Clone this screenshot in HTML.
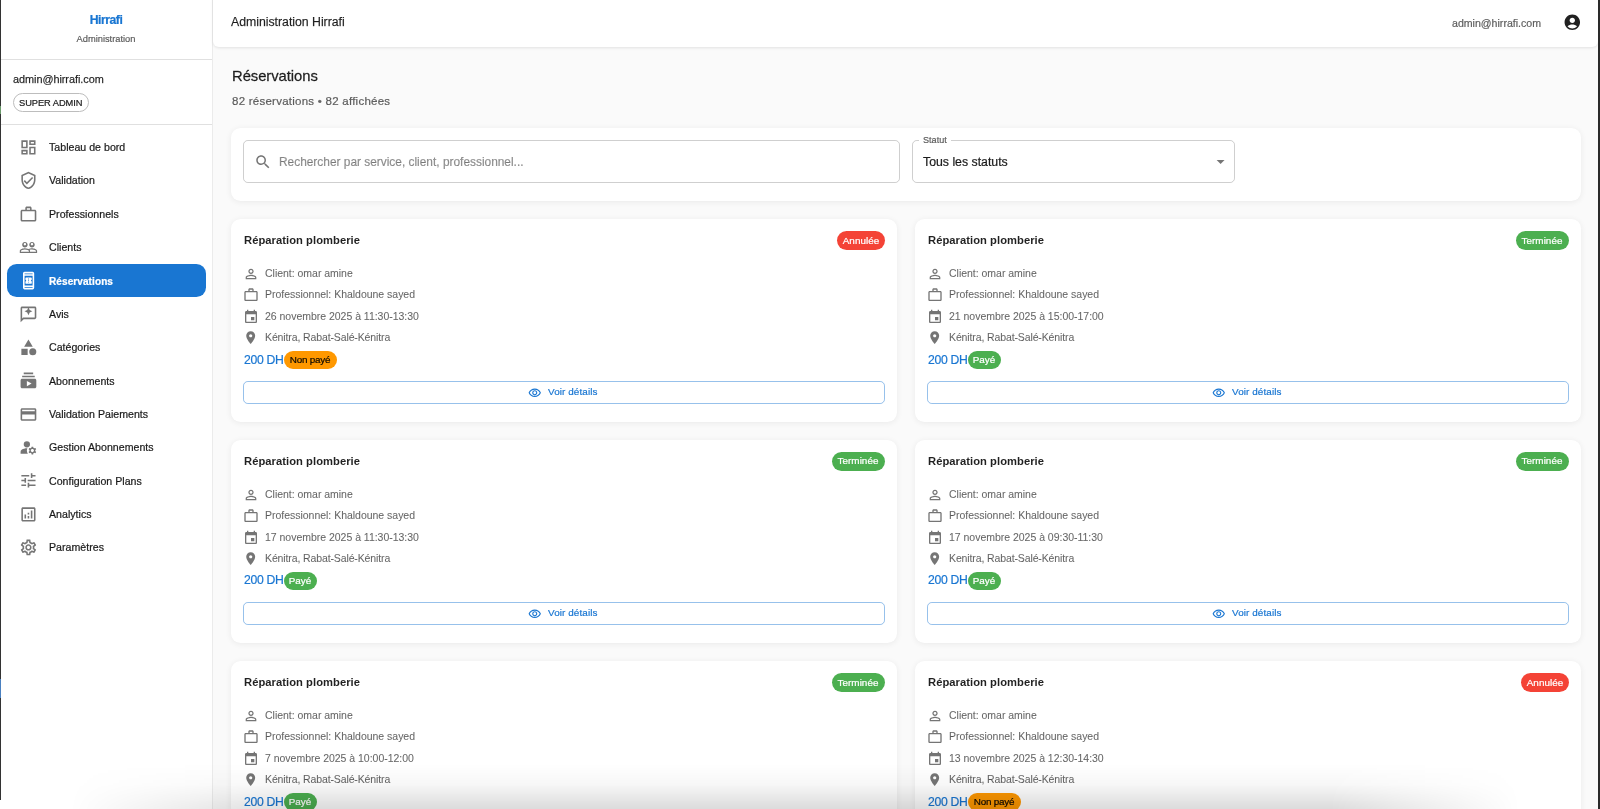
<!DOCTYPE html>
<html lang="fr"><head><meta charset="utf-8"><title>Administration Hirrafi</title>
<style>
*{box-sizing:border-box;margin:0;padding:0}
html,body{width:1600px;height:809px;overflow:hidden;background:#fafafa;font-family:"Liberation Sans",sans-serif}
#root{position:relative;width:1600px;height:809px;overflow:hidden;background:#fafafa}
.t{position:absolute;white-space:nowrap;line-height:1.117;will-change:transform;-webkit-text-stroke:0.22px currentColor}
.ic{position:absolute;display:block}
#sidebar{position:absolute;left:0;top:0;width:213px;height:809px;background:#fff;border-right:1px solid rgba(0,0,0,0.08)}
.hr{position:absolute;height:1px;background:rgba(0,0,0,0.12)}
.chip-o{position:absolute;border:1px solid #bdbdbd;border-radius:10px}
.chip{position:absolute;border-radius:10px}
.sel{position:absolute;background:#1976d2;border-radius:9.6px}
#topbar{position:absolute;left:213px;top:-6px;width:1385px;height:53px;background:#fff;border-radius:6px;box-shadow:0 1px 3px rgba(0,0,0,0.10)}
.card{position:absolute;background:#fff;border-radius:9.6px;box-shadow:0 1px 6px rgba(0,0,0,0.07)}
.input{position:absolute;border:1px solid rgba(0,0,0,0.19);border-radius:4.8px}
.btn{position:absolute;border:1px solid rgba(25,118,210,0.45);border-radius:4.8px}
#bs{position:absolute;left:0;top:764px;width:1600px;height:45px;background:linear-gradient(to bottom,rgba(0,0,0,0),rgba(0,0,0,0.03) 45%,rgba(0,0,0,0.14));-webkit-mask-image:linear-gradient(to right,transparent 70px,#000 300px,#000 1330px,transparent 1520px);pointer-events:none}
#lb{position:absolute;left:0;top:0;width:1.2px;height:800px;background:#333}
.mk{position:absolute;left:0;width:1.2px}
#rb{position:absolute;left:1598px;top:0;width:2px;height:809px;background:#2a2a2a}
</style></head>
<body><div id="root">
<div id="sidebar"></div>
<div class="t" style="top:14.00px;font-size:12.2px;color:#1976d2;font-weight:700;letter-spacing:-0.45px;left:-193.60px;width:600px;text-align:center;">Hirrafi</div>
<div class="t" style="top:34.00px;font-size:9.3px;color:rgba(0,0,0,0.6);left:-193.60px;width:600px;text-align:center;">Administration</div>
<div class="hr" style="left:1px;top:59px;width:211px"></div>
<div class="t" style="top:73.00px;font-size:10.9px;color:rgba(0,0,0,0.87);letter-spacing:-0.05px;left:12.90px;-webkit-text-stroke:0.25px rgba(0,0,0,0.6);">admin@hirrafi.com</div>
<div class="chip-o" style="left:12.9px;top:93.1px;width:75.7px;height:19px"></div>
<div class="t" style="top:98.00px;font-size:9.3px;color:rgba(0,0,0,0.87);letter-spacing:-0.05px;left:18.90px;">SUPER ADMIN</div>
<div class="hr" style="left:1px;top:124px;width:211px"></div>
<svg class="ic" style="left:19.00px;top:138.05px;width:18.9px;height:18.9px" viewBox="0 0 24 24"><path fill="rgba(0,0,0,0.54)" fill-rule="nonzero" d="M19 5v2h-4V5zM9 5v6H5V5zm10 8v6h-4v-6zM9 17v2H5v-2zM21 3h-8v6h8zM11 3H3v10h8zm10 8h-8v10h8zm-10 4H3v6h8z"/></svg>
<div class="t" style="top:142.00px;font-size:10.6px;color:rgba(0,0,0,0.87);letter-spacing:0.02px;left:49.40px;">Tableau de bord</div>
<svg class="ic" style="left:19.00px;top:171.38px;width:18.9px;height:18.9px" viewBox="0 0 24 24"><path fill="rgba(0,0,0,0.54)" fill-rule="nonzero" d="M12 1 3 5v6c0 5.55 3.84 10.74 9 12 5.16-1.26 9-6.45 9-12V5zm7 10c0 4.52-2.98 8.69-7 9.93-4.02-1.24-7-5.41-7-9.93V6.3l7-3.11 7 3.11zm-11.59.59L6 13l4 4 8-8-1.41-1.42L10 14.17z"/></svg>
<div class="t" style="top:175.00px;font-size:10.6px;color:rgba(0,0,0,0.87);letter-spacing:0.02px;left:49.40px;">Validation</div>
<svg class="ic" style="left:19.00px;top:204.71px;width:18.9px;height:18.9px" viewBox="0 0 24 24"><path fill="rgba(0,0,0,0.54)" fill-rule="nonzero" d="M14 6V4h-4v2zM4 8v11h16V8zm16-2c1.11 0 2 .89 2 2v11c0 1.11-.89 2-2 2H4c-1.11 0-2-.89-2-2l.01-11c0-1.11.88-2 1.99-2h4V4c0-1.11.89-2 2-2h4c1.11 0 2 .89 2 2v2z"/></svg>
<div class="t" style="top:209.00px;font-size:10.6px;color:rgba(0,0,0,0.87);letter-spacing:0.02px;left:49.40px;">Professionnels</div>
<svg class="ic" style="left:19.00px;top:238.04px;width:18.9px;height:18.9px" viewBox="0 0 24 24"><path fill="rgba(0,0,0,0.54)" fill-rule="nonzero" d="M16.5 13c-1.2 0-3.07.34-4.5 1-1.43-.67-3.3-1-4.5-1C5.33 13 1 14.08 1 16.25V19h22v-2.75c0-2.17-4.33-3.25-6.5-3.25m-4 4.5h-10v-1.25c0-.54 2.56-1.75 5-1.75s5 1.21 5 1.75zm9 0H14v-1.25c0-.46-.2-.86-.52-1.22.88-.3 1.96-.53 3.02-.53 2.44 0 5 1.21 5 1.75zM7.5 12c1.93 0 3.5-1.57 3.5-3.5S9.43 5 7.5 5 4 6.57 4 8.5 5.570 12 7.5 12m0-5.5c.83 0 1.5.67 1.5 1.5s-.67 1.5-1.5 1.5S6 8.83 6 8s.67-1.5 1.5-1.5m9 5.5c1.93 0 3.5-1.57 3.5-3.5S18.43 5 16.5 5 13 6.57 13 8.5s1.57 3.5 3.5 3.5m0-5.5c.83 0 1.5.67 1.5 1.5s-.67 1.5-1.5 1.5-1.5-.67-1.5-1.5.67-1.5 1.5-1.5"/></svg>
<div class="t" style="top:242.00px;font-size:10.6px;color:rgba(0,0,0,0.87);letter-spacing:0.02px;left:49.40px;">Clients</div>
<div class="sel" style="left:6.9px;top:264.22px;width:199.4px;height:33px"></div>
<svg class="ic" style="left:18.60px;top:271.22px;width:19.2px;height:19.2px" viewBox="0 0 24 24"><path fill="#fff" fill-rule="evenodd" d="M17 1H7c-1.1 0-2 .9-2 2v18c0 1.1.9 2 2 2h10c1.1 0 2-.9 2-2V3c0-1.1-.9-2-2-2zM7 3h10v1H7zM7 6h10v12H7zM7 20h10v1H7zM16 11V9.14C16 8.51 15.55 8 15 8H9c-.55 0-1 .51-1 1.14v1.96c.55 0 1 .45 1 1s-.45 1-1 1v1.76c0 .63.45 1.14 1 1.14h6c.55 0 1-.51 1-1.14V13c-.55 0-1-.45-1-1s.45-1 1-1zM12.5 14.5h-1v-1h1zM12.5 12.5h-1v-1h1zM12.5 10.5h-1v-1h1z"/></svg>
<div class="t" style="top:276.00px;font-size:10.0px;color:#fff;font-weight:700;letter-spacing:0.1px;left:49.40px;">Réservations</div>
<svg class="ic" style="left:19.00px;top:304.70px;width:18.9px;height:18.9px" viewBox="0 0 24 24"><path fill="rgba(0,0,0,0.54)" fill-rule="nonzero" d="M20 2H4c-1.1 0-1.99.9-1.99 2L2 22l4-4h14c1.1 0 2-.9 2-2V4c0-1.1-.9-2-2-2m0 14H5.17L4 17.17V4h16zm-8-3 1.57-3.43L17 8l-3.43-1.57L12 3l-1.57 3.43L7 8l3.43 1.57z"/></svg>
<div class="t" style="top:309.00px;font-size:10.6px;color:rgba(0,0,0,0.87);letter-spacing:0.02px;left:49.40px;">Avis</div>
<svg class="ic" style="left:19.00px;top:338.03px;width:18.9px;height:18.9px" viewBox="0 0 24 24"><path fill="rgba(0,0,0,0.54)" fill-rule="nonzero" d="M12 2l-5.5 9h11zM17.5 17.5m-4.5 0a4.5 4.5 0 1 0 9 0a4.5 4.5 0 1 0 -9 0M3 13.5h8v8H3z"/></svg>
<div class="t" style="top:342.00px;font-size:10.6px;color:rgba(0,0,0,0.87);letter-spacing:0.02px;left:49.40px;">Catégories</div>
<svg class="ic" style="left:19.00px;top:371.36px;width:18.9px;height:18.9px" viewBox="0 0 24 24"><path fill="rgba(0,0,0,0.54)" fill-rule="nonzero" d="M20 8H4V6h16zm-2-6H6v2h12zm4 10v8c0 1.1-.9 2-2 2H4c-1.1 0-2-.9-2-2v-8c0-1.1.9-2 2-2h16c1.1 0 2 .9 2 2m-6 4-6-3.27v6.53z"/></svg>
<div class="t" style="top:376.00px;font-size:10.6px;color:rgba(0,0,0,0.87);letter-spacing:0.02px;left:49.40px;">Abonnements</div>
<svg class="ic" style="left:19.00px;top:404.69px;width:18.9px;height:18.9px" viewBox="0 0 24 24"><path fill="rgba(0,0,0,0.54)" fill-rule="nonzero" d="M20 4H4c-1.11 0-1.99.89-1.99 2L2 18c0 1.11.89 2 2 2h16c1.11 0 2-.89 2-2V6c0-1.11-.89-2-2-2m0 14H4v-6h16zm0-10H4V6h16z"/></svg>
<div class="t" style="top:409.00px;font-size:10.6px;color:rgba(0,0,0,0.87);letter-spacing:0.02px;left:49.40px;">Validation Paiements</div>
<svg class="ic" style="left:19.00px;top:438.02px;width:18.9px;height:18.9px" viewBox="0 0 24 24"><path fill="rgba(0,0,0,0.54)" fill-rule="nonzero" d="M10.67 13.02c-.22-.01-.44-.02-.67-.02-2.42 0-4.68.67-6.61 1.82-.88.52-1.39 1.5-1.39 2.53V20h9.26c-.79-1.13-1.26-2.51-1.26-4 0-1.07.25-2.07.67-2.98M10 8m-4 0a4 4 0 1 0 8 0a4 4 0 1 0 -8 0M20.750 16c0-.22-.03-.42-.06-.63l1.14-1.01-1-1.73-1.45.49c-.32-.27-.68-.48-1.08-.63L18 11h-2l-.3 1.49c-.4.15-.76.36-1.08.63l-1.45-.49-1 1.73 1.14 1.01c-.03.21-.06.41-.06.63s.03.42.06.63l-1.14 1.01 1 1.73 1.45-.49c.32.27.68.48 1.08.63L16 21h2l.3-1.49c.4-.15.76-.36 1.08-.63l1.45.49 1-1.73-1.14-1.01c.03-.21.06-.41.06-.63M17 18c-1.1 0-2-.9-2-2s.9-2 2-2 2 .9 2 2-.9 2-2 2"/></svg>
<div class="t" style="top:442.00px;font-size:10.6px;color:rgba(0,0,0,0.87);letter-spacing:0.02px;left:49.40px;">Gestion Abonnements</div>
<svg class="ic" style="left:19.00px;top:471.35px;width:18.9px;height:18.9px" viewBox="0 0 24 24"><path fill="rgba(0,0,0,0.54)" fill-rule="nonzero" d="M3 17v2h6v-2zM3 5v2h10V5zm10 16v-2h8v-2h-8v-2h-2v6zM7 9v2H3v2h4v2h2V9zm14 4v-2H11v2zm-6-4h2V7h4V5h-4V3h-2z"/></svg>
<div class="t" style="top:476.00px;font-size:10.6px;color:rgba(0,0,0,0.87);letter-spacing:0.02px;left:49.40px;">Configuration Plans</div>
<svg class="ic" style="left:19.00px;top:504.68px;width:18.9px;height:18.9px" viewBox="0 0 24 24"><path fill="rgba(0,0,0,0.54)" fill-rule="nonzero" d="M19 3H5c-1.1 0-2 .9-2 2v14c0 1.1.9 2 2 2h14c1.1 0 2-.9 2-2V5c0-1.1-.9-2-2-2m0 16H5V5h14zM7 12h2v5H7zm8-5h2v10h-2zm-4 7h2v3h-2zm0-4h2v2h-2z"/></svg>
<div class="t" style="top:509.00px;font-size:10.6px;color:rgba(0,0,0,0.87);letter-spacing:0.02px;left:49.40px;">Analytics</div>
<svg class="ic" style="left:19.00px;top:538.01px;width:18.9px;height:18.9px" viewBox="0 0 24 24"><path fill="rgba(0,0,0,0.54)" fill-rule="nonzero" d="M19.43 12.98c.04-.32.07-.64.07-.98 0-.34-.03-.66-.07-.98l2.11-1.65c.19-.15.24-.42.12-.64l-2-3.46c-.09-.16-.26-.25-.44-.25-.06 0-.12.01-.17.03l-2.49 1c-.52-.4-1.08-.73-1.69-.98l-.38-2.65C14.46 2.18 14.25 2 14 2h-4c-.25 0-.46.18-.49.42l-.38 2.65c-.61.25-1.17.59-1.69.98l-2.49-1c-.06-.02-.12-.03-.18-.03-.17 0-.34.09-.43.25l-2 3.46c-.13.22-.07.49.12.64l2.11 1.65c-.04.32-.07.65-.07.98s.03.66.07.98l-2.11 1.65c-.19.15-.24.42-.12.64l2 3.46c.09.16.26.25.44.25.06 0 .12-.01.17-.03l2.490-1c.52.4 1.08.73 1.69.98l.38 2.65c.03.24.24.42.49.42h4c.25 0 .46-.18.49-.42l.38-2.65c.61-.25 1.17-.59 1.69-.98l2.49 1c.06.02.12.03.18.03.17 0 .34-.09.43-.25l2-3.46c.12-.22.07-.49-.12-.64zm-1.98-1.71c.04.31.05.52.05.73 0 .21-.02.43-.05.73l-.14 1.13.89.7 1.08.84-.7 1.21-1.27-.51-1.04-.42-.9.68c-.43.32-.84.56-1.25.73l-1.06.43-.16 1.13-.2 1.35h-1.4l-.19-1.35-.16-1.13-1.06-.43c-.43-.18-.83-.41-1.23-.71l-.91-.7-1.06.43-1.27.51-.7-1.21 1.08-.84.89-.7-.14-1.130c-.03-.31-.05-.54-.05-.74s.02-.43.05-.73l.14-1.13-.89-.7-1.08-.84.7-1.21 1.27.51 1.04.42.9-.68c.43-.32.84-.56 1.25-.73l1.06-.43.16-1.13.2-1.35h1.39l.19 1.35.16 1.13 1.06.43c.43.18.83.41 1.23.71l.91.7 1.06-.43 1.27-.51.7 1.21-1.07.85-.89.7zM12 8c-2.21 0-4 1.79-4 4s1.79 4 4 4 4-1.79 4-4-1.79-4-4-4m0 6c-1.1 0-2-.9-2-2s.9-2 2-2 2 .9 2 2-.9 2-2 2"/></svg>
<div class="t" style="top:542.00px;font-size:10.6px;color:rgba(0,0,0,0.87);letter-spacing:0.02px;left:49.40px;">Paramètres</div>
<div id="topbar"></div>
<div class="t" style="top:16.00px;font-size:12.3px;color:rgba(0,0,0,0.87);letter-spacing:-0.02px;left:231.40px;-webkit-text-stroke:0.25px rgba(0,0,0,0.6);">Administration Hirrafi</div>
<div class="t" style="top:18.00px;font-size:10.6px;color:rgba(0,0,0,0.6);right:59.00px;">admin@hirrafi.com</div>
<svg class="ic" style="left:1562.95px;top:13.45px;width:18.6px;height:18.6px" viewBox="0 0 24 24"><path fill="rgba(0,0,0,0.87)" fill-rule="nonzero" d="M12 2C6.48 2 2 6.48 2 12s4.48 10 10 10 10-4.48 10-10S17.52 2 12 2m0 4c1.93 0 3.5 1.57 3.5 3.5S13.93 13 12 13s-3.5-1.57-3.5-3.5S10.07 6 12 6m0 14c-2.03 0-4.43-.82-6.14-2.88C7.55 15.8 9.68 15 12 15s4.45.8 6.14 2.12C16.43 19.18 14.03 20 12 20"/></svg>
<div class="t" style="top:68.00px;font-size:14.8px;color:rgba(0,0,0,0.87);letter-spacing:-0.05px;left:231.70px;-webkit-text-stroke:0.3px rgba(0,0,0,0.7);">Réservations</div>
<div class="t" style="top:95.00px;font-size:11.5px;color:rgba(0,0,0,0.6);letter-spacing:0.25px;left:231.70px;">82 réservations • 82 affichées</div>
<div class="card" style="left:231.2px;top:128.1px;width:1349.8px;height:72.8px"></div>
<div class="input" style="left:243.1px;top:140.4px;width:657.4px;height:42.2px"></div>
<svg class="ic" style="left:253.75px;top:152.55px;width:18px;height:18px" viewBox="0 0 24 24"><path fill="rgba(0,0,0,0.54)" fill-rule="nonzero" d="M15.5 14h-.79l-.28-.27C15.41 12.59 16 11.11 16 9.5 16 5.91 13.09 3 9.5 3S3 5.91 3 9.5 5.91 16 9.5 16c1.61 0 3.09-.59 4.23-1.57l.27.28v.79l5 4.99L20.49 19zm-6 0C7.01 14 5 11.99 5 9.5S7.01 5 9.5 5 14 7.01 14 9.5 11.99 14 9.5 14"/></svg>
<div class="t" style="top:156.00px;font-size:11.9px;color:rgba(0,0,0,0.42);left:278.60px;">Rechercher par service, client, professionnel...</div>
<div class="input" style="left:912.3px;top:140.4px;width:323.2px;height:42.2px"></div>
<div style="position:absolute;left:919px;top:138px;width:32px;height:5px;background:#fff"></div>
<div class="t" style="top:135.00px;font-size:9.1px;color:rgba(0,0,0,0.6);left:922.90px;">Statut</div>
<div class="t" style="top:156.00px;font-size:12.3px;color:rgba(0,0,0,0.87);left:922.90px;">Tous les statuts</div>
<svg class="ic" style="left:1211.30px;top:151.60px;width:19.2px;height:19.2px" viewBox="0 0 24 24"><path fill="rgba(0,0,0,0.54)" fill-rule="nonzero" d="M7 10l5 5 5-5z"/></svg>
<div class="card" style="left:231.00px;top:219.10px;width:665.6px;height:202.8px"></div>
<div class="t" style="top:234.00px;font-size:11.2px;color:rgba(0,0,0,0.87);font-weight:700;letter-spacing:0.05px;left:243.70px;-webkit-text-stroke:0px;">Réparation plomberie</div>
<div class="chip" style="left:836.80px;top:231.00px;width:48.0px;height:18.7px;background:#f44336"></div>
<div class="t" style="top:235.00px;font-size:9.9px;color:#fff;letter-spacing:0.05px;left:560.80px;width:600px;text-align:center;">Annulée</div>
<svg class="ic" style="left:242.80px;top:266.40px;width:16px;height:16px" viewBox="0 0 24 24"><path fill="rgba(0,0,0,0.54)" fill-rule="nonzero" d="M12 5.9c1.16 0 2.1.94 2.1 2.1s-.94 2.1-2.1 2.1S9.9 9.16 9.9 8s.94-2.1 2.1-2.1m0 9c2.97 0 6.1 1.46 6.1 2.1v1.1H5.9V17c0-.64 3.13-2.1 6.1-2.1M12 4C9.79 4 8 5.79 8 8s1.79 4 4 4 4-1.79 4-4-1.79-4-4-4m0 9c-2.67 0-8 1.34-8 4v3h16v-3c0-2.66-5.33-4-8-4"/></svg>
<div class="t" style="top:268.00px;font-size:10.5px;color:rgba(0,0,0,0.6);letter-spacing:-0.02px;left:264.50px;-webkit-text-stroke:0.15px rgba(0,0,0,0.35);">Client: omar amine</div>
<svg class="ic" style="left:242.80px;top:287.10px;width:16px;height:16px" viewBox="0 0 24 24"><path fill="rgba(0,0,0,0.54)" fill-rule="nonzero" d="M14 6V4h-4v2zM4 8v11h16V8zm16-2c1.11 0 2 .89 2 2v11c0 1.11-.89 2-2 2H4c-1.11 0-2-.89-2-2l.01-11c0-1.11.88-2 1.99-2h4V4c0-1.11.89-2 2-2h4c1.11 0 2 .89 2 2v2z"/></svg>
<div class="t" style="top:289.00px;font-size:10.5px;color:rgba(0,0,0,0.6);letter-spacing:-0.02px;left:264.50px;-webkit-text-stroke:0.15px rgba(0,0,0,0.35);">Professionnel: Khaldoune sayed</div>
<svg class="ic" style="left:242.80px;top:309.00px;width:16px;height:16px" viewBox="0 0 24 24"><path fill="rgba(0,0,0,0.54)" fill-rule="nonzero" d="M17 12h-5v5h5zM16 1v2H8V1H6v2H5c-1.11 0-1.99.9-1.99 2L3 19c0 1.1.89 2 2 2h14c1.1 0 2-.9 2-2V5c0-1.1-.9-2-2-2h-1V1zm3 18H5V8h14z"/></svg>
<div class="t" style="top:311.00px;font-size:10.5px;color:rgba(0,0,0,0.6);letter-spacing:-0.02px;left:264.50px;-webkit-text-stroke:0.15px rgba(0,0,0,0.35);">26 novembre 2025 à 11:30-13:30</div>
<svg class="ic" style="left:242.80px;top:330.30px;width:15.4px;height:15.4px" viewBox="0 0 24 24"><path fill="rgba(0,0,0,0.54)" fill-rule="nonzero" d="M12 2C8.13 2 5 5.13 5 9c0 5.25 7 13 7 13s7-7.75 7-13c0-3.87-3.13-7-7-7m0 9.5c-1.38 0-2.5-1.12-2.5-2.5s1.12-2.5 2.5-2.5 2.5 1.12 2.5 2.5-1.12 2.5-2.5 2.5"/></svg>
<div class="t" style="top:332.00px;font-size:10.5px;color:rgba(0,0,0,0.6);letter-spacing:-0.12px;left:264.50px;-webkit-text-stroke:0.15px rgba(0,0,0,0.35);">Kénitra, Rabat-Salé-Kénitra</div>
<div class="t" style="top:354.00px;font-size:12.2px;color:#1976d2;letter-spacing:-0.3px;left:243.60px;-webkit-text-stroke:0.2px #1976d2;">200 DH</div>
<div class="chip" style="left:283.60px;top:351.00px;width:53.0px;height:17.7px;background:#ff9800"></div>
<div class="t" style="top:354.00px;font-size:9.9px;color:rgba(0,0,0,0.92);letter-spacing:-0.25px;left:10.10px;width:600px;text-align:center;">Non payé</div>
<div class="btn" style="left:243.10px;top:381.00px;width:641.7px;height:22.6px"></div>
<svg class="ic" style="left:528.35px;top:385.60px;width:13.5px;height:13.5px" viewBox="0 0 24 24"><path fill="#1976d2" fill-rule="nonzero" d="M12 6.5c3.79 0 7.17 2.13 8.82 5.5-1.65 3.37-5.02 5.5-8.82 5.5S4.83 15.37 3.18 12C4.83 8.63 8.21 6.5 12 6.5m0-2C7 4.5 2.73 7.610 1 12c1.73 4.39 6 7.5 11 7.5s9.27-3.11 11-7.5c-1.73-4.39-6-7.5-11-7.5m0 5c1.38 0 2.5 1.12 2.5 2.5s-1.12 2.5-2.5 2.5-2.5-1.12-2.5-2.5 1.12-2.5 2.5-2.5m0-2c-2.48 0-4.5 2.02-4.5 4.5s2.02 4.5 4.5 4.5 4.5-2.02 4.5-4.5-2.02-4.5-4.5-4.5"/></svg>
<div class="t" style="top:386.00px;font-size:9.9px;color:#1976d2;letter-spacing:0.1px;left:548.45px;-webkit-text-stroke:0.2px #1976d2;">Voir détails</div>
<div class="card" style="left:915.00px;top:219.10px;width:665.6px;height:202.8px"></div>
<div class="t" style="top:234.00px;font-size:11.2px;color:rgba(0,0,0,0.87);font-weight:700;letter-spacing:0.05px;left:927.70px;-webkit-text-stroke:0px;">Réparation plomberie</div>
<div class="chip" style="left:1515.80px;top:231.00px;width:53.0px;height:18.7px;background:#4caf50"></div>
<div class="t" style="top:235.00px;font-size:9.9px;color:#fff;letter-spacing:0.05px;left:1242.30px;width:600px;text-align:center;">Terminée</div>
<svg class="ic" style="left:926.80px;top:266.40px;width:16px;height:16px" viewBox="0 0 24 24"><path fill="rgba(0,0,0,0.54)" fill-rule="nonzero" d="M12 5.9c1.16 0 2.1.94 2.1 2.1s-.94 2.1-2.1 2.1S9.9 9.16 9.9 8s.94-2.1 2.1-2.1m0 9c2.97 0 6.1 1.46 6.1 2.1v1.1H5.9V17c0-.64 3.13-2.1 6.1-2.1M12 4C9.79 4 8 5.79 8 8s1.79 4 4 4 4-1.79 4-4-1.79-4-4-4m0 9c-2.67 0-8 1.34-8 4v3h16v-3c0-2.66-5.33-4-8-4"/></svg>
<div class="t" style="top:268.00px;font-size:10.5px;color:rgba(0,0,0,0.6);letter-spacing:-0.02px;left:948.50px;-webkit-text-stroke:0.15px rgba(0,0,0,0.35);">Client: omar amine</div>
<svg class="ic" style="left:926.80px;top:287.10px;width:16px;height:16px" viewBox="0 0 24 24"><path fill="rgba(0,0,0,0.54)" fill-rule="nonzero" d="M14 6V4h-4v2zM4 8v11h16V8zm16-2c1.11 0 2 .89 2 2v11c0 1.11-.89 2-2 2H4c-1.11 0-2-.89-2-2l.01-11c0-1.11.88-2 1.99-2h4V4c0-1.11.89-2 2-2h4c1.11 0 2 .89 2 2v2z"/></svg>
<div class="t" style="top:289.00px;font-size:10.5px;color:rgba(0,0,0,0.6);letter-spacing:-0.02px;left:948.50px;-webkit-text-stroke:0.15px rgba(0,0,0,0.35);">Professionnel: Khaldoune sayed</div>
<svg class="ic" style="left:926.80px;top:309.00px;width:16px;height:16px" viewBox="0 0 24 24"><path fill="rgba(0,0,0,0.54)" fill-rule="nonzero" d="M17 12h-5v5h5zM16 1v2H8V1H6v2H5c-1.11 0-1.99.9-1.99 2L3 19c0 1.1.89 2 2 2h14c1.1 0 2-.9 2-2V5c0-1.1-.9-2-2-2h-1V1zm3 18H5V8h14z"/></svg>
<div class="t" style="top:311.00px;font-size:10.5px;color:rgba(0,0,0,0.6);letter-spacing:-0.02px;left:948.50px;-webkit-text-stroke:0.15px rgba(0,0,0,0.35);">21 novembre 2025 à 15:00-17:00</div>
<svg class="ic" style="left:926.80px;top:330.30px;width:15.4px;height:15.4px" viewBox="0 0 24 24"><path fill="rgba(0,0,0,0.54)" fill-rule="nonzero" d="M12 2C8.13 2 5 5.13 5 9c0 5.25 7 13 7 13s7-7.75 7-13c0-3.87-3.13-7-7-7m0 9.5c-1.38 0-2.5-1.12-2.5-2.5s1.12-2.5 2.5-2.5 2.5 1.12 2.5 2.5-1.12 2.5-2.5 2.5"/></svg>
<div class="t" style="top:332.00px;font-size:10.5px;color:rgba(0,0,0,0.6);letter-spacing:-0.12px;left:948.50px;-webkit-text-stroke:0.15px rgba(0,0,0,0.35);">Kénitra, Rabat-Salé-Kénitra</div>
<div class="t" style="top:354.00px;font-size:12.2px;color:#1976d2;letter-spacing:-0.3px;left:927.60px;-webkit-text-stroke:0.2px #1976d2;">200 DH</div>
<div class="chip" style="left:967.60px;top:351.00px;width:33.0px;height:17.7px;background:#4caf50"></div>
<div class="t" style="top:354.00px;font-size:9.9px;color:#fff;left:684.10px;width:600px;text-align:center;">Payé</div>
<div class="btn" style="left:927.10px;top:381.00px;width:641.7px;height:22.6px"></div>
<svg class="ic" style="left:1212.35px;top:385.60px;width:13.5px;height:13.5px" viewBox="0 0 24 24"><path fill="#1976d2" fill-rule="nonzero" d="M12 6.5c3.79 0 7.17 2.13 8.82 5.5-1.65 3.37-5.02 5.5-8.82 5.5S4.83 15.37 3.18 12C4.83 8.63 8.21 6.5 12 6.5m0-2C7 4.5 2.73 7.610 1 12c1.73 4.39 6 7.5 11 7.5s9.27-3.11 11-7.5c-1.73-4.39-6-7.5-11-7.5m0 5c1.38 0 2.5 1.12 2.5 2.5s-1.12 2.5-2.5 2.5-2.5-1.12-2.5-2.5 1.12-2.5 2.5-2.5m0-2c-2.48 0-4.5 2.02-4.5 4.5s2.02 4.5 4.5 4.5 4.5-2.02 4.5-4.5-2.02-4.5-4.5-4.5"/></svg>
<div class="t" style="top:386.00px;font-size:9.9px;color:#1976d2;letter-spacing:0.1px;left:1232.45px;-webkit-text-stroke:0.2px #1976d2;">Voir détails</div>
<div class="card" style="left:231.00px;top:440.10px;width:665.6px;height:202.8px"></div>
<div class="t" style="top:455.00px;font-size:11.2px;color:rgba(0,0,0,0.87);font-weight:700;letter-spacing:0.05px;left:243.70px;-webkit-text-stroke:0px;">Réparation plomberie</div>
<div class="chip" style="left:831.80px;top:452.00px;width:53.0px;height:18.7px;background:#4caf50"></div>
<div class="t" style="top:455.00px;font-size:9.9px;color:#fff;letter-spacing:0.05px;left:558.30px;width:600px;text-align:center;">Terminée</div>
<svg class="ic" style="left:242.80px;top:487.40px;width:16px;height:16px" viewBox="0 0 24 24"><path fill="rgba(0,0,0,0.54)" fill-rule="nonzero" d="M12 5.9c1.16 0 2.1.94 2.1 2.1s-.94 2.1-2.1 2.1S9.9 9.16 9.9 8s.94-2.1 2.1-2.1m0 9c2.97 0 6.1 1.46 6.1 2.1v1.1H5.9V17c0-.64 3.13-2.1 6.1-2.1M12 4C9.79 4 8 5.79 8 8s1.79 4 4 4 4-1.79 4-4-1.79-4-4-4m0 9c-2.67 0-8 1.34-8 4v3h16v-3c0-2.66-5.33-4-8-4"/></svg>
<div class="t" style="top:489.00px;font-size:10.5px;color:rgba(0,0,0,0.6);letter-spacing:-0.02px;left:264.50px;-webkit-text-stroke:0.15px rgba(0,0,0,0.35);">Client: omar amine</div>
<svg class="ic" style="left:242.80px;top:508.10px;width:16px;height:16px" viewBox="0 0 24 24"><path fill="rgba(0,0,0,0.54)" fill-rule="nonzero" d="M14 6V4h-4v2zM4 8v11h16V8zm16-2c1.11 0 2 .89 2 2v11c0 1.11-.89 2-2 2H4c-1.11 0-2-.89-2-2l.01-11c0-1.11.88-2 1.99-2h4V4c0-1.11.89-2 2-2h4c1.11 0 2 .89 2 2v2z"/></svg>
<div class="t" style="top:510.00px;font-size:10.5px;color:rgba(0,0,0,0.6);letter-spacing:-0.02px;left:264.50px;-webkit-text-stroke:0.15px rgba(0,0,0,0.35);">Professionnel: Khaldoune sayed</div>
<svg class="ic" style="left:242.80px;top:530.00px;width:16px;height:16px" viewBox="0 0 24 24"><path fill="rgba(0,0,0,0.54)" fill-rule="nonzero" d="M17 12h-5v5h5zM16 1v2H8V1H6v2H5c-1.11 0-1.99.9-1.99 2L3 19c0 1.1.89 2 2 2h14c1.1 0 2-.9 2-2V5c0-1.1-.9-2-2-2h-1V1zm3 18H5V8h14z"/></svg>
<div class="t" style="top:532.00px;font-size:10.5px;color:rgba(0,0,0,0.6);letter-spacing:-0.02px;left:264.50px;-webkit-text-stroke:0.15px rgba(0,0,0,0.35);">17 novembre 2025 à 11:30-13:30</div>
<svg class="ic" style="left:242.80px;top:551.30px;width:15.4px;height:15.4px" viewBox="0 0 24 24"><path fill="rgba(0,0,0,0.54)" fill-rule="nonzero" d="M12 2C8.13 2 5 5.13 5 9c0 5.25 7 13 7 13s7-7.75 7-13c0-3.87-3.13-7-7-7m0 9.5c-1.38 0-2.5-1.12-2.5-2.5s1.12-2.5 2.5-2.5 2.5 1.12 2.5 2.5-1.12 2.5-2.5 2.5"/></svg>
<div class="t" style="top:553.00px;font-size:10.5px;color:rgba(0,0,0,0.6);letter-spacing:-0.12px;left:264.50px;-webkit-text-stroke:0.15px rgba(0,0,0,0.35);">Kénitra, Rabat-Salé-Kénitra</div>
<div class="t" style="top:574.00px;font-size:12.2px;color:#1976d2;letter-spacing:-0.3px;left:243.60px;-webkit-text-stroke:0.2px #1976d2;">200 DH</div>
<div class="chip" style="left:283.60px;top:572.00px;width:33.0px;height:17.7px;background:#4caf50"></div>
<div class="t" style="top:575.00px;font-size:9.9px;color:#fff;left:0.10px;width:600px;text-align:center;">Payé</div>
<div class="btn" style="left:243.10px;top:602.00px;width:641.7px;height:22.6px"></div>
<svg class="ic" style="left:528.35px;top:606.60px;width:13.5px;height:13.5px" viewBox="0 0 24 24"><path fill="#1976d2" fill-rule="nonzero" d="M12 6.5c3.79 0 7.17 2.13 8.82 5.5-1.65 3.37-5.02 5.5-8.82 5.5S4.83 15.37 3.18 12C4.83 8.63 8.21 6.5 12 6.5m0-2C7 4.5 2.73 7.610 1 12c1.73 4.39 6 7.5 11 7.5s9.27-3.11 11-7.5c-1.73-4.39-6-7.5-11-7.5m0 5c1.38 0 2.5 1.12 2.5 2.5s-1.12 2.5-2.5 2.5-2.5-1.12-2.5-2.5 1.12-2.5 2.5-2.5m0-2c-2.48 0-4.5 2.02-4.5 4.5s2.02 4.5 4.5 4.5 4.5-2.02 4.5-4.5-2.02-4.5-4.5-4.5"/></svg>
<div class="t" style="top:607.00px;font-size:9.9px;color:#1976d2;letter-spacing:0.1px;left:548.45px;-webkit-text-stroke:0.2px #1976d2;">Voir détails</div>
<div class="card" style="left:915.00px;top:440.10px;width:665.6px;height:202.8px"></div>
<div class="t" style="top:455.00px;font-size:11.2px;color:rgba(0,0,0,0.87);font-weight:700;letter-spacing:0.05px;left:927.70px;-webkit-text-stroke:0px;">Réparation plomberie</div>
<div class="chip" style="left:1515.80px;top:452.00px;width:53.0px;height:18.7px;background:#4caf50"></div>
<div class="t" style="top:455.00px;font-size:9.9px;color:#fff;letter-spacing:0.05px;left:1242.30px;width:600px;text-align:center;">Terminée</div>
<svg class="ic" style="left:926.80px;top:487.40px;width:16px;height:16px" viewBox="0 0 24 24"><path fill="rgba(0,0,0,0.54)" fill-rule="nonzero" d="M12 5.9c1.16 0 2.1.94 2.1 2.1s-.94 2.1-2.1 2.1S9.9 9.16 9.9 8s.94-2.1 2.1-2.1m0 9c2.97 0 6.1 1.46 6.1 2.1v1.1H5.9V17c0-.64 3.13-2.1 6.1-2.1M12 4C9.79 4 8 5.79 8 8s1.79 4 4 4 4-1.79 4-4-1.79-4-4-4m0 9c-2.67 0-8 1.34-8 4v3h16v-3c0-2.66-5.33-4-8-4"/></svg>
<div class="t" style="top:489.00px;font-size:10.5px;color:rgba(0,0,0,0.6);letter-spacing:-0.02px;left:948.50px;-webkit-text-stroke:0.15px rgba(0,0,0,0.35);">Client: omar amine</div>
<svg class="ic" style="left:926.80px;top:508.10px;width:16px;height:16px" viewBox="0 0 24 24"><path fill="rgba(0,0,0,0.54)" fill-rule="nonzero" d="M14 6V4h-4v2zM4 8v11h16V8zm16-2c1.11 0 2 .89 2 2v11c0 1.11-.89 2-2 2H4c-1.11 0-2-.89-2-2l.01-11c0-1.11.88-2 1.99-2h4V4c0-1.11.89-2 2-2h4c1.11 0 2 .89 2 2v2z"/></svg>
<div class="t" style="top:510.00px;font-size:10.5px;color:rgba(0,0,0,0.6);letter-spacing:-0.02px;left:948.50px;-webkit-text-stroke:0.15px rgba(0,0,0,0.35);">Professionnel: Khaldoune sayed</div>
<svg class="ic" style="left:926.80px;top:530.00px;width:16px;height:16px" viewBox="0 0 24 24"><path fill="rgba(0,0,0,0.54)" fill-rule="nonzero" d="M17 12h-5v5h5zM16 1v2H8V1H6v2H5c-1.11 0-1.99.9-1.99 2L3 19c0 1.1.89 2 2 2h14c1.1 0 2-.9 2-2V5c0-1.1-.9-2-2-2h-1V1zm3 18H5V8h14z"/></svg>
<div class="t" style="top:532.00px;font-size:10.5px;color:rgba(0,0,0,0.6);letter-spacing:-0.02px;left:948.50px;-webkit-text-stroke:0.15px rgba(0,0,0,0.35);">17 novembre 2025 à 09:30-11:30</div>
<svg class="ic" style="left:926.80px;top:551.30px;width:15.4px;height:15.4px" viewBox="0 0 24 24"><path fill="rgba(0,0,0,0.54)" fill-rule="nonzero" d="M12 2C8.13 2 5 5.13 5 9c0 5.25 7 13 7 13s7-7.75 7-13c0-3.87-3.13-7-7-7m0 9.5c-1.38 0-2.5-1.12-2.5-2.5s1.12-2.5 2.5-2.5 2.5 1.12 2.5 2.5-1.12 2.5-2.5 2.5"/></svg>
<div class="t" style="top:553.00px;font-size:10.5px;color:rgba(0,0,0,0.6);letter-spacing:-0.12px;left:948.50px;-webkit-text-stroke:0.15px rgba(0,0,0,0.35);">Kenitra, Rabat-Salé-Kénitra</div>
<div class="t" style="top:574.00px;font-size:12.2px;color:#1976d2;letter-spacing:-0.3px;left:927.60px;-webkit-text-stroke:0.2px #1976d2;">200 DH</div>
<div class="chip" style="left:967.60px;top:572.00px;width:33.0px;height:17.7px;background:#4caf50"></div>
<div class="t" style="top:575.00px;font-size:9.9px;color:#fff;left:684.10px;width:600px;text-align:center;">Payé</div>
<div class="btn" style="left:927.10px;top:602.00px;width:641.7px;height:22.6px"></div>
<svg class="ic" style="left:1212.35px;top:606.60px;width:13.5px;height:13.5px" viewBox="0 0 24 24"><path fill="#1976d2" fill-rule="nonzero" d="M12 6.5c3.79 0 7.17 2.13 8.82 5.5-1.65 3.37-5.02 5.5-8.82 5.5S4.83 15.37 3.18 12C4.83 8.63 8.21 6.5 12 6.5m0-2C7 4.5 2.73 7.610 1 12c1.73 4.39 6 7.5 11 7.5s9.27-3.11 11-7.5c-1.73-4.39-6-7.5-11-7.5m0 5c1.38 0 2.5 1.12 2.5 2.5s-1.12 2.5-2.5 2.5-2.5-1.12-2.5-2.5 1.12-2.5 2.5-2.5m0-2c-2.48 0-4.5 2.02-4.5 4.5s2.02 4.5 4.5 4.5 4.5-2.02 4.5-4.5-2.02-4.5-4.5-4.5"/></svg>
<div class="t" style="top:607.00px;font-size:9.9px;color:#1976d2;letter-spacing:0.1px;left:1232.45px;-webkit-text-stroke:0.2px #1976d2;">Voir détails</div>
<div class="card" style="left:231.00px;top:661.10px;width:665.6px;height:202.8px"></div>
<div class="t" style="top:676.00px;font-size:11.2px;color:rgba(0,0,0,0.87);font-weight:700;letter-spacing:0.05px;left:243.70px;-webkit-text-stroke:0px;">Réparation plomberie</div>
<div class="chip" style="left:831.80px;top:673.00px;width:53.0px;height:18.7px;background:#4caf50"></div>
<div class="t" style="top:677.00px;font-size:9.9px;color:#fff;letter-spacing:0.05px;left:558.30px;width:600px;text-align:center;">Terminée</div>
<svg class="ic" style="left:242.80px;top:708.40px;width:16px;height:16px" viewBox="0 0 24 24"><path fill="rgba(0,0,0,0.54)" fill-rule="nonzero" d="M12 5.9c1.16 0 2.1.94 2.1 2.1s-.94 2.1-2.1 2.1S9.9 9.16 9.9 8s.94-2.1 2.1-2.1m0 9c2.97 0 6.1 1.46 6.1 2.1v1.1H5.9V17c0-.64 3.13-2.1 6.1-2.1M12 4C9.79 4 8 5.79 8 8s1.79 4 4 4 4-1.79 4-4-1.79-4-4-4m0 9c-2.67 0-8 1.34-8 4v3h16v-3c0-2.66-5.33-4-8-4"/></svg>
<div class="t" style="top:710.00px;font-size:10.5px;color:rgba(0,0,0,0.6);letter-spacing:-0.02px;left:264.50px;-webkit-text-stroke:0.15px rgba(0,0,0,0.35);">Client: omar amine</div>
<svg class="ic" style="left:242.80px;top:729.10px;width:16px;height:16px" viewBox="0 0 24 24"><path fill="rgba(0,0,0,0.54)" fill-rule="nonzero" d="M14 6V4h-4v2zM4 8v11h16V8zm16-2c1.11 0 2 .89 2 2v11c0 1.11-.89 2-2 2H4c-1.11 0-2-.89-2-2l.01-11c0-1.11.88-2 1.99-2h4V4c0-1.11.89-2 2-2h4c1.11 0 2 .89 2 2v2z"/></svg>
<div class="t" style="top:731.00px;font-size:10.5px;color:rgba(0,0,0,0.6);letter-spacing:-0.02px;left:264.50px;-webkit-text-stroke:0.15px rgba(0,0,0,0.35);">Professionnel: Khaldoune sayed</div>
<svg class="ic" style="left:242.80px;top:751.00px;width:16px;height:16px" viewBox="0 0 24 24"><path fill="rgba(0,0,0,0.54)" fill-rule="nonzero" d="M17 12h-5v5h5zM16 1v2H8V1H6v2H5c-1.11 0-1.99.9-1.99 2L3 19c0 1.1.89 2 2 2h14c1.1 0 2-.9 2-2V5c0-1.1-.9-2-2-2h-1V1zm3 18H5V8h14z"/></svg>
<div class="t" style="top:753.00px;font-size:10.5px;color:rgba(0,0,0,0.6);letter-spacing:-0.02px;left:264.50px;-webkit-text-stroke:0.15px rgba(0,0,0,0.35);">7 novembre 2025 à 10:00-12:00</div>
<svg class="ic" style="left:242.80px;top:772.30px;width:15.4px;height:15.4px" viewBox="0 0 24 24"><path fill="rgba(0,0,0,0.54)" fill-rule="nonzero" d="M12 2C8.13 2 5 5.13 5 9c0 5.25 7 13 7 13s7-7.75 7-13c0-3.87-3.13-7-7-7m0 9.5c-1.38 0-2.5-1.12-2.5-2.5s1.12-2.5 2.5-2.5 2.5 1.12 2.5 2.5-1.12 2.5-2.5 2.5"/></svg>
<div class="t" style="top:774.00px;font-size:10.5px;color:rgba(0,0,0,0.6);letter-spacing:-0.12px;left:264.50px;-webkit-text-stroke:0.15px rgba(0,0,0,0.35);">Kénitra, Rabat-Salé-Kénitra</div>
<div class="t" style="top:796.00px;font-size:12.2px;color:#1976d2;letter-spacing:-0.3px;left:243.60px;-webkit-text-stroke:0.2px #1976d2;">200 DH</div>
<div class="chip" style="left:283.60px;top:793.00px;width:33.0px;height:17.7px;background:#4caf50"></div>
<div class="t" style="top:796.00px;font-size:9.9px;color:#fff;left:0.10px;width:600px;text-align:center;">Payé</div>
<div class="btn" style="left:243.10px;top:823.00px;width:641.7px;height:22.6px"></div>
<svg class="ic" style="left:528.35px;top:827.60px;width:13.5px;height:13.5px" viewBox="0 0 24 24"><path fill="#1976d2" fill-rule="nonzero" d="M12 6.5c3.79 0 7.17 2.13 8.82 5.5-1.65 3.37-5.02 5.5-8.82 5.5S4.83 15.37 3.18 12C4.83 8.63 8.21 6.5 12 6.5m0-2C7 4.5 2.73 7.610 1 12c1.73 4.39 6 7.5 11 7.5s9.27-3.11 11-7.5c-1.73-4.39-6-7.5-11-7.5m0 5c1.38 0 2.5 1.12 2.5 2.5s-1.12 2.5-2.5 2.5-2.5-1.12-2.5-2.5 1.12-2.5 2.5-2.5m0-2c-2.48 0-4.5 2.02-4.5 4.5s2.02 4.5 4.5 4.5 4.5-2.02 4.5-4.5-2.02-4.5-4.5-4.5"/></svg>
<div class="t" style="top:828.00px;font-size:9.9px;color:#1976d2;letter-spacing:0.1px;left:548.45px;-webkit-text-stroke:0.2px #1976d2;">Voir détails</div>
<div class="card" style="left:915.00px;top:661.10px;width:665.6px;height:202.8px"></div>
<div class="t" style="top:676.00px;font-size:11.2px;color:rgba(0,0,0,0.87);font-weight:700;letter-spacing:0.05px;left:927.70px;-webkit-text-stroke:0px;">Réparation plomberie</div>
<div class="chip" style="left:1520.80px;top:673.00px;width:48.0px;height:18.7px;background:#f44336"></div>
<div class="t" style="top:677.00px;font-size:9.9px;color:#fff;letter-spacing:0.05px;left:1244.80px;width:600px;text-align:center;">Annulée</div>
<svg class="ic" style="left:926.80px;top:708.40px;width:16px;height:16px" viewBox="0 0 24 24"><path fill="rgba(0,0,0,0.54)" fill-rule="nonzero" d="M12 5.9c1.16 0 2.1.94 2.1 2.1s-.94 2.1-2.1 2.1S9.9 9.16 9.9 8s.94-2.1 2.1-2.1m0 9c2.97 0 6.1 1.46 6.1 2.1v1.1H5.9V17c0-.64 3.13-2.1 6.1-2.1M12 4C9.79 4 8 5.79 8 8s1.79 4 4 4 4-1.79 4-4-1.79-4-4-4m0 9c-2.67 0-8 1.34-8 4v3h16v-3c0-2.66-5.33-4-8-4"/></svg>
<div class="t" style="top:710.00px;font-size:10.5px;color:rgba(0,0,0,0.6);letter-spacing:-0.02px;left:948.50px;-webkit-text-stroke:0.15px rgba(0,0,0,0.35);">Client: omar amine</div>
<svg class="ic" style="left:926.80px;top:729.10px;width:16px;height:16px" viewBox="0 0 24 24"><path fill="rgba(0,0,0,0.54)" fill-rule="nonzero" d="M14 6V4h-4v2zM4 8v11h16V8zm16-2c1.11 0 2 .89 2 2v11c0 1.11-.89 2-2 2H4c-1.11 0-2-.89-2-2l.01-11c0-1.11.88-2 1.99-2h4V4c0-1.11.89-2 2-2h4c1.11 0 2 .89 2 2v2z"/></svg>
<div class="t" style="top:731.00px;font-size:10.5px;color:rgba(0,0,0,0.6);letter-spacing:-0.02px;left:948.50px;-webkit-text-stroke:0.15px rgba(0,0,0,0.35);">Professionnel: Khaldoune sayed</div>
<svg class="ic" style="left:926.80px;top:751.00px;width:16px;height:16px" viewBox="0 0 24 24"><path fill="rgba(0,0,0,0.54)" fill-rule="nonzero" d="M17 12h-5v5h5zM16 1v2H8V1H6v2H5c-1.11 0-1.99.9-1.99 2L3 19c0 1.1.89 2 2 2h14c1.1 0 2-.9 2-2V5c0-1.1-.9-2-2-2h-1V1zm3 18H5V8h14z"/></svg>
<div class="t" style="top:753.00px;font-size:10.5px;color:rgba(0,0,0,0.6);letter-spacing:-0.02px;left:948.50px;-webkit-text-stroke:0.15px rgba(0,0,0,0.35);">13 novembre 2025 à 12:30-14:30</div>
<svg class="ic" style="left:926.80px;top:772.30px;width:15.4px;height:15.4px" viewBox="0 0 24 24"><path fill="rgba(0,0,0,0.54)" fill-rule="nonzero" d="M12 2C8.13 2 5 5.13 5 9c0 5.25 7 13 7 13s7-7.75 7-13c0-3.87-3.13-7-7-7m0 9.5c-1.38 0-2.5-1.12-2.5-2.5s1.12-2.5 2.5-2.5 2.5 1.12 2.5 2.5-1.12 2.5-2.5 2.5"/></svg>
<div class="t" style="top:774.00px;font-size:10.5px;color:rgba(0,0,0,0.6);letter-spacing:-0.12px;left:948.50px;-webkit-text-stroke:0.15px rgba(0,0,0,0.35);">Kénitra, Rabat-Salé-Kénitra</div>
<div class="t" style="top:796.00px;font-size:12.2px;color:#1976d2;letter-spacing:-0.3px;left:927.60px;-webkit-text-stroke:0.2px #1976d2;">200 DH</div>
<div class="chip" style="left:967.60px;top:793.00px;width:53.0px;height:17.7px;background:#ff9800"></div>
<div class="t" style="top:796.00px;font-size:9.9px;color:rgba(0,0,0,0.92);letter-spacing:-0.25px;left:694.10px;width:600px;text-align:center;">Non payé</div>
<div class="btn" style="left:927.10px;top:823.00px;width:641.7px;height:22.6px"></div>
<svg class="ic" style="left:1212.35px;top:827.60px;width:13.5px;height:13.5px" viewBox="0 0 24 24"><path fill="#1976d2" fill-rule="nonzero" d="M12 6.5c3.79 0 7.17 2.13 8.82 5.5-1.65 3.37-5.02 5.5-8.82 5.5S4.83 15.37 3.18 12C4.83 8.63 8.21 6.5 12 6.5m0-2C7 4.5 2.73 7.610 1 12c1.73 4.39 6 7.5 11 7.5s9.27-3.11 11-7.5c-1.73-4.39-6-7.5-11-7.5m0 5c1.38 0 2.5 1.12 2.5 2.5s-1.12 2.5-2.5 2.5-2.5-1.12-2.5-2.5 1.12-2.5 2.5-2.5m0-2c-2.48 0-4.5 2.02-4.5 4.5s2.02 4.5 4.5 4.5 4.5-2.02 4.5-4.5-2.02-4.5-4.5-4.5"/></svg>
<div class="t" style="top:828.00px;font-size:9.9px;color:#1976d2;letter-spacing:0.1px;left:1232.45px;-webkit-text-stroke:0.2px #1976d2;">Voir détails</div>
<div id="bs"></div><div id="lb"></div><div class="mk" style="top:106px;height:8px;background:#6a9a6a"></div><div class="mk" style="top:679px;height:19px;background:#4a80c0"></div><div id="rb"></div>
</div></body></html>
